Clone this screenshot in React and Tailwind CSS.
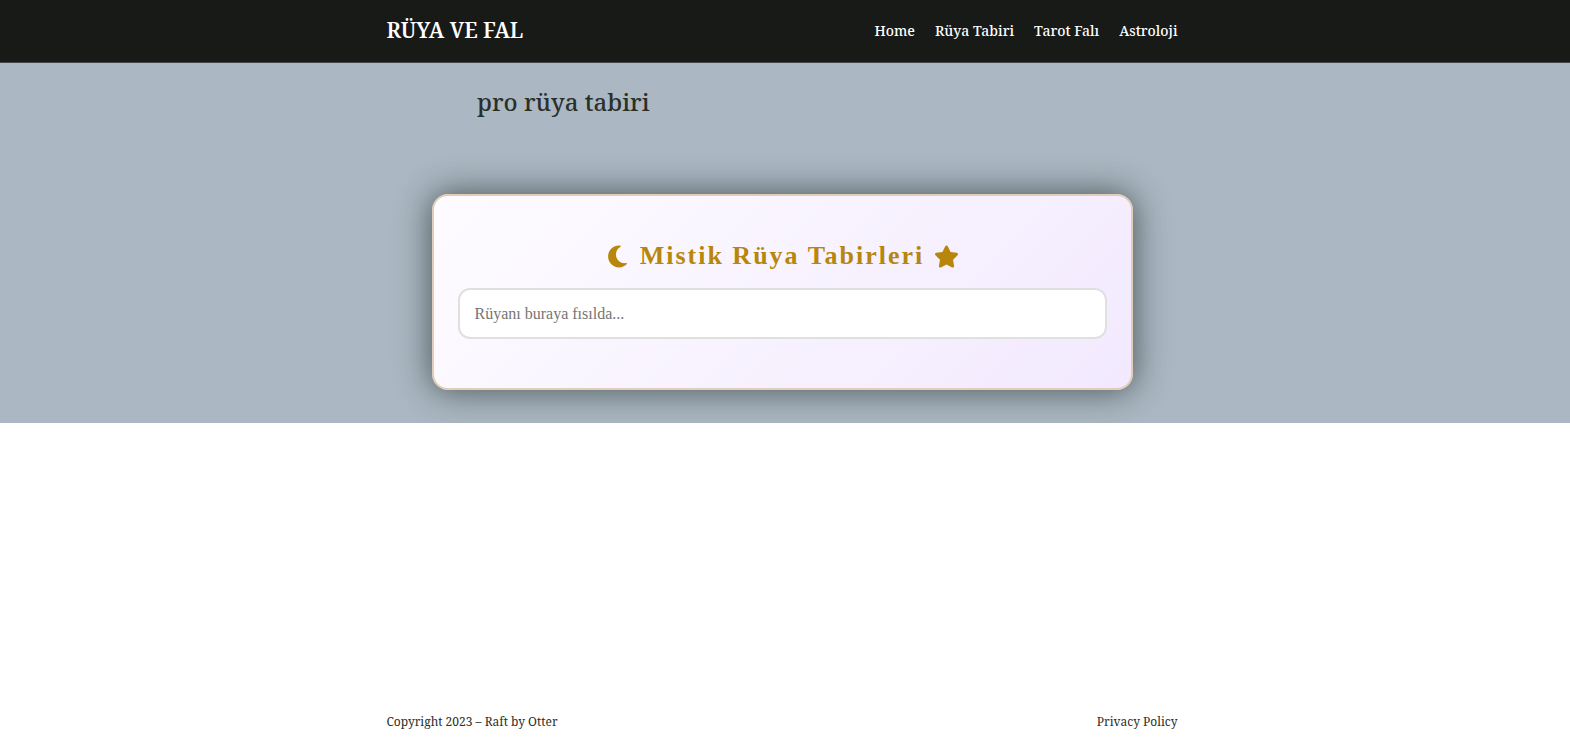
import React, { useState } from 'react';
import { FaMoon, FaStar } from 'react-icons/fa6';

const navLinks = [
  { label: 'Home', href: '#home' },
  { label: 'Rüya Tabiri', href: '#ruya-tabiri' },
  { label: 'Tarot Falı', href: '#tarot-fali' },
  { label: 'Astroloji', href: '#astroloji' },
];

function Header() {
  return (
    <header className="border-b border-[#45454a] bg-[#181a17] pr-1.5 text-white">
      <div className="mx-auto flex h-[62px] w-full max-w-[791px] items-center justify-between">
        <a href="#home" className="text-[21px] font-semibold">
          RÜYA VE FAL
        </a>
        <nav className="flex gap-5 text-sm font-medium">
          {navLinks.map((link) => (
            <a key={link.label} href={link.href} className="hover:underline">
              {link.label}
            </a>
          ))}
        </nav>
      </div>
    </header>
  );
}

function DreamSearch() {
  const [dream, setDream] = useState('');

  return (
    <section className="mx-auto mt-[72px] w-full max-w-[701px] rounded-2xl border-2 border-[#e2cdb8] bg-linear-135 from-[#fefcff] via-[#f8f3ff] to-[#f2e9fe] px-6 pt-10 pb-[49px] font-['Liberation_Serif',serif] shadow-[0_0_30px_rgba(0,0,0,0.4),0_0_40px_rgba(40,70,60,0.3)]">
      <h2 className="flex items-center justify-center gap-2.5 text-[26px] leading-10 font-bold tracking-[2px] text-[#b8860b]">
        <FaMoon aria-hidden="true" className="size-[25px]" />
        Mistik Rüya Tabirleri
        <FaStar aria-hidden="true" className="size-[25px]" />
      </h2>
      <input
        type="text"
        aria-label="Rüyan"
        placeholder="Rüyanı buraya fısılda..."
        value={dream}
        onChange={(e) => setDream(e.target.value)}
        className="mt-3 block h-[51px] w-full rounded-xl border-2 border-[#e0e0e0] bg-white px-[15px] text-base text-gray-800 placeholder:text-[#757575]"
      />
    </section>
  );
}

export default function App() {
  return (
    <div className="flex min-h-screen flex-col bg-white font-['Noto_Serif','Liberation_Serif',serif] text-[#2b2f2a]">
      <Header />

      <main className="overflow-hidden bg-[#abb7c2] pt-[19px] pr-1.5 pb-[33px]">
        <h1 className="mx-auto w-full max-w-[610px] text-2xl leading-10 font-medium">pro rüya tabiri</h1>
        <DreamSearch />
      </main>

      <footer className="mt-auto pr-1.5 pb-5">
        <div className="mx-auto flex w-full max-w-[791px] justify-between text-xs">
          <p>Copyright 2023 – Raft by Otter</p>
          <a href="#privacy">Privacy Policy</a>
        </div>
      </footer>
    </div>
  );
}
